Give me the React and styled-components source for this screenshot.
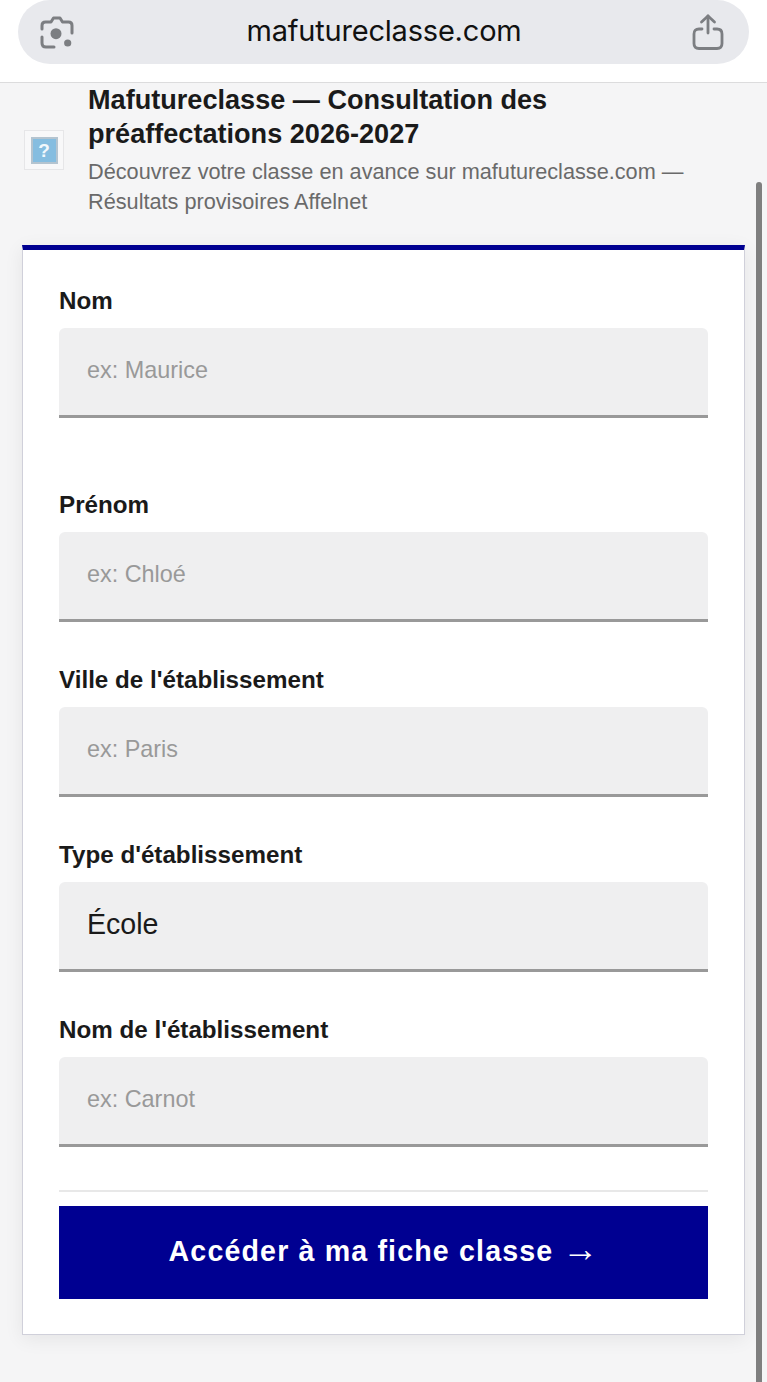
import React from "react";
import styled, { createGlobalStyle } from "styled-components";

const fields = [
  { label: "Nom", placeholder: "ex: Maurice", gap: 72 },
  { label: "Prénom", placeholder: "ex: Chloé", gap: 43 },
  { label: "Ville de l'établissement", placeholder: "ex: Paris", gap: 43 },
  { label: "Type d'établissement", value: "École", gap: 43 },
  { label: "Nom de l'établissement", placeholder: "ex: Carnot", gap: 43 },
];

const App = () => (
  <Page>
    <GlobalStyle />
    <BrowserBar>
      <UrlPill>
        <LensIcon />
        <UrlText>mafutureclasse.com</UrlText>
        <ShareIcon />
      </UrlPill>
    </BrowserBar>
    <Content>
      <SiteHeader>
        <BrokenLogo>
          <BrokenGlyph>?</BrokenGlyph>
        </BrokenLogo>
        <HeaderText>
          <Title>Mafutureclasse — Consultation des préaffectations 2026-2027</Title>
          <Subtitle>
            Découvrez votre classe en avance sur mafutureclasse.com — Résultats provisoires Affelnet
          </Subtitle>
        </HeaderText>
      </SiteHeader>
      <Card>
        {fields.map((field) => (
          <Field key={field.label} $gap={field.gap}>
            <Label>{field.label}</Label>
            {field.value ? (
              <SelectBox defaultValue={field.value}>
                <option>École</option>
                <option>Collège</option>
                <option>Lycée</option>
              </SelectBox>
            ) : (
              <TextInput placeholder={field.placeholder} />
            )}
          </Field>
        ))}
        <Divider />
        <SubmitButton>
          Accéder à ma fiche classe <Arrow>→</Arrow>
        </SubmitButton>
      </Card>
    </Content>
    <ScrollThumb />
  </Page>
);

const LensIcon = () => (
  <svg width="34" height="34" viewBox="0 0 34 34" fill="none" stroke="#7c7e82" strokeWidth="3" strokeLinecap="round" strokeLinejoin="round">
    <path d="M2 14V10.5Q2 7 5.5 7H11L13.5 3H20L22.5 7H28.5Q32 7 32 10.5V18" />
    <path d="M2 22V28Q2 32 6 32H14" />
    <circle cx="16" cy="18.7" r="5.5" fill="#7c7e82" stroke="none" />
    <circle cx="27.7" cy="28" r="3.6" fill="#7c7e82" stroke="none" />
  </svg>
);

const ShareIcon = () => (
  <svg width="32" height="36" viewBox="0 0 32 36" fill="none" stroke="#7c7e82" strokeWidth="2.8" strokeLinecap="round" strokeLinejoin="round">
    <path d="M16 19V2" />
    <path d="M9.5 8L16 2L22.5 8" />
    <path d="M10 15H7Q2 15 2 20V29.5Q2 34.5 7 34.5H25Q30 34.5 30 29.5V20Q30 15 25 15H22" />
  </svg>
);

const GlobalStyle = createGlobalStyle`
  html, body {
    margin: 0;
    overflow: hidden;
    background: #f5f5f6;
  }

  * {
    box-sizing: border-box;
  }
`;

const Page = styled.div`
  font-family: "Liberation Sans", Arial, sans-serif;
  height: 1382px;
  overflow: hidden;
  position: relative;
  width: 767px;
`;

const BrowserBar = styled.div`
  background: #fff;
  border-bottom: 1px solid #dcdcdd;
  height: 83px;
  padding: 0 18px;
`;

const UrlPill = styled.div`
  align-items: center;
  background: #e8e9ed;
  border-radius: 32px;
  display: flex;
  height: 64px;
  justify-content: space-between;
  padding: 0 25px 0 22px;
  width: 731px;
`;

const UrlText = styled.span`
  color: #111;
  font-family: "Inter", "Liberation Sans", sans-serif;
  font-size: 29px;
  letter-spacing: -0.2px;
  margin: -4px 0 0 2px;
`;

const Content = styled.main`
  padding: 0 22px;
`;

const SiteHeader = styled.header`
  align-items: center;
  display: flex;
  gap: 24px;
  height: 162px;
  padding: 0 0 28px 2px;
`;

const BrokenLogo = styled.div`
  align-items: center;
  background: #f8f8f9;
  border: 1px solid #e6e6e8;
  display: flex;
  flex-shrink: 0;
  height: 40px;
  justify-content: center;
  width: 40px;
`;

const BrokenGlyph = styled.span`
  background: #85bde0;
  border: 2px solid #b4c4d0;
  color: #f2f8fc;
  display: block;
  font-size: 19px;
  font-weight: 700;
  height: 27px;
  line-height: 23px;
  text-align: center;
  width: 27px;
`;

const HeaderText = styled.div`
  width: 625px;
`;

const Title = styled.h1`
  color: #1a1a1a;
  font-size: 27.1px;
  font-weight: 700;
  line-height: 34px;
  margin: 0 0 6px;
`;

const Subtitle = styled.p`
  color: #6a6a6a;
  font-size: 21.7px;
  line-height: 30px;
  margin: 0;
`;

const Card = styled.section`
  background: #fff;
  border: 1px solid #d0d0da;
  border-top: 5px solid #000091;
  box-shadow: 0 4px 18px rgba(0, 0, 18, 0.07);
  height: 1090px;
  padding: 36px 36px 0;
  width: 723px;
`;

const Field = styled.div`
  margin-bottom: ${(props) => props.$gap}px;
`;

const Label = styled.label`
  color: #1a1a1a;
  display: block;
  font-size: 24.2px;
  font-weight: 700;
  height: 42px;
  line-height: 30px;
`;

const inputBase = `
  background: #efeff0;
  border: 0;
  border-bottom: 3px solid #999;
  border-radius: 6px 6px 0 0;
  color: #1a1a1a;
  display: block;
  font-family: "Liberation Sans", Arial, sans-serif;
  height: 90px;
  outline: none;
  padding: 0 28px 2px;
  width: 100%;
`;

const TextInput = styled.input`
  ${inputBase}
  font-size: 23.4px;

  &::placeholder {
    color: #999;
    opacity: 1;
  }
`;

const SelectBox = styled.select`
  ${inputBase}
  appearance: none;
  font-size: 28.6px;
  padding-bottom: 4px;
`;

const Divider = styled.hr`
  border: 0;
  border-top: 2px solid #e8e8e8;
  margin: 0;
`;

const SubmitButton = styled.button`
  background: #000091;
  border: 0;
  color: #fff;
  cursor: pointer;
  display: block;
  font-family: "Liberation Sans", Arial, sans-serif;
  font-size: 28.6px;
  font-weight: 700;
  height: 93px;
  letter-spacing: 1.15px;
  margin-top: 14px;
  padding: 0 0 2px;
  width: 100%;
`;

const Arrow = styled.span`
  font-family: "Liberation Serif", serif;
  font-size: 36px;
  font-weight: 400;
  letter-spacing: 0;
  line-height: 0;
`;

const ScrollThumb = styled.div`
  background: #7f7f7f;
  border-radius: 3px 3px 0 0;
  height: 1200px;
  position: absolute;
  right: 5px;
  top: 182px;
  width: 6px;
`;

export default App;
